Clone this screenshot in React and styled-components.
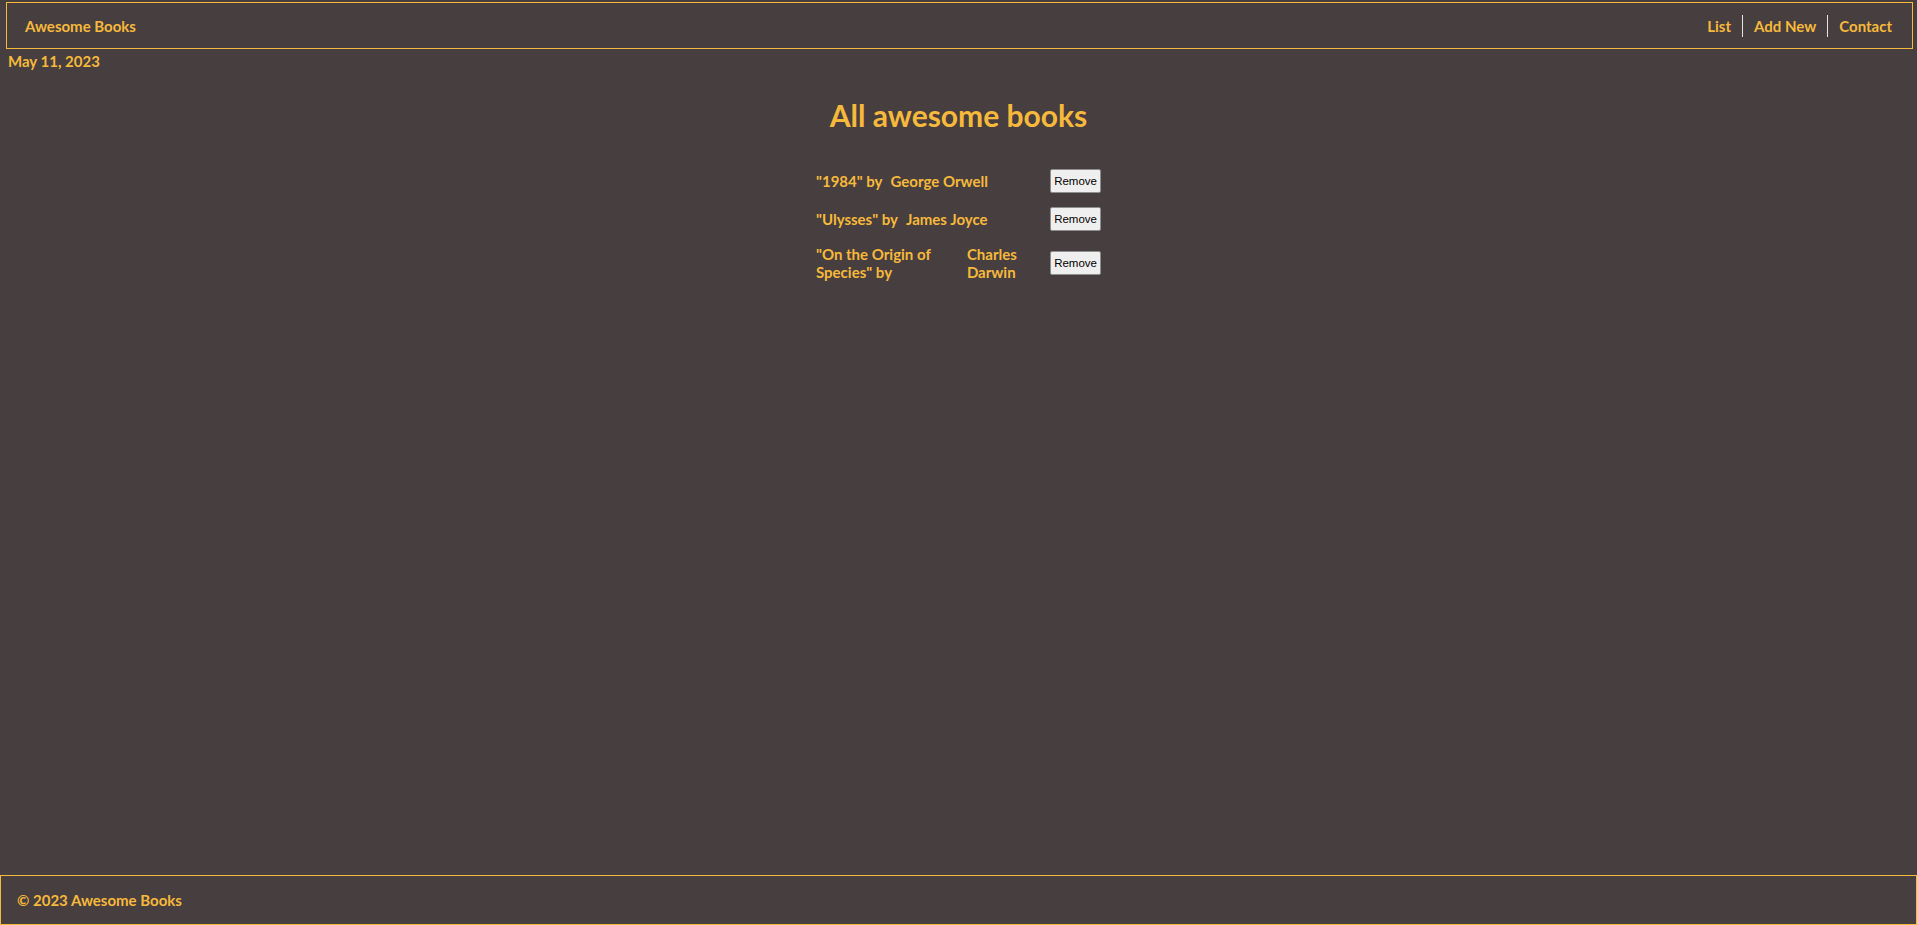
import React from "react";
import styled, { createGlobalStyle } from "styled-components";

const GlobalStyle = createGlobalStyle`
  * { box-sizing: border-box; }
  body {
    margin: 0;
    background: #463e3f;
    color: #f7b93b;
    font-family: Lato, "Liberation Sans", sans-serif;
  }
`;

const Page = styled.div`
  min-height: 100vh;
  display: flex;
  flex-direction: column;
`;

const Header = styled.header`
  margin: 2px 4px 0 6px;
  height: 47px;
  border: 1px solid #f7b93b;
  display: flex;
  align-items: center;
  justify-content: space-between;
  padding: 0 20px 0 18px;
`;

const Brand = styled.span`
  font-size: 15px;
  font-weight: 700;
`;

const Nav = styled.ul`
  list-style: none;
  margin: 0;
  padding: 0;
  display: flex;
  align-items: center;
`;

const NavItem = styled.li`
  font-size: 15px;
  font-weight: 700;
  line-height: 22px;
  padding: 0 11px;
  border-left: ${(p) => (p.$first ? "none" : "1px solid #e8e4e4")};
  &:last-child { padding-right: 0; }
`;

const DateLine = styled.div`
  margin: 3px 0 0 8px;
  font-size: 15px;
  font-weight: 700;
  line-height: 18px;
`;

const Main = styled.main`
  flex: 1;
  display: flex;
  flex-direction: column;
  align-items: center;
`;

const Title = styled.h1`
  margin: 27px 0 36px;
  font-size: 30px;
  font-weight: 700;
  line-height: 36px;
`;

const List = styled.ul`
  list-style: none;
  margin: 0;
  padding: 0;
  width: 285px;
  display: flex;
  flex-direction: column;
  gap: 14px;
`;

const Row = styled.li`
  display: flex;
  align-items: center;
  gap: 8px;
  font-size: 15px;
  font-weight: 700;
  line-height: 18px;
`;

const BookTitle = styled.span`
  flex: 0 1 auto;
`;

const Author = styled.span`
  flex: 0 1 auto;
`;

const RemoveButton = styled.button`
  margin-left: auto;
  flex: none;
  font-family: "Liberation Sans", Arial, sans-serif;
  font-size: 11.5px;
  color: #000;
  background: #efefef;
  border: 1px solid #8f8f8f;
  border-radius: 2px;
  padding: 4px 3px;
  line-height: 14px;
`;

const Footer = styled.footer`
  height: 50px;
  border: 1px solid #f7b93b;
  display: flex;
  align-items: center;
  padding-left: 16px;
  font-size: 15px;
  font-weight: 700;
`;

const books = [
  { title: "1984", author: "George Orwell" },
  { title: "Ulysses", author: "James Joyce" },
  { title: "On the Origin of Species", author: "Charles Darwin" },
];

export default function App() {
  return (
    <>
      <GlobalStyle />
      <Page>
        <Header>
          <Brand>Awesome Books</Brand>
          <Nav>
            <NavItem $first>List</NavItem>
            <NavItem>Add New</NavItem>
            <NavItem>Contact</NavItem>
          </Nav>
        </Header>
        <DateLine>May 11, 2023</DateLine>
        <Main>
          <Title>All awesome books</Title>
          <List>
            {books.map((b) => (
              <Row key={b.title}>
                <BookTitle>"{b.title}" by</BookTitle>
                <Author>{b.author}</Author>
                <RemoveButton type="button">Remove</RemoveButton>
              </Row>
            ))}
          </List>
        </Main>
        <Footer>© 2023 Awesome Books</Footer>
      </Page>
    </>
  );
}
